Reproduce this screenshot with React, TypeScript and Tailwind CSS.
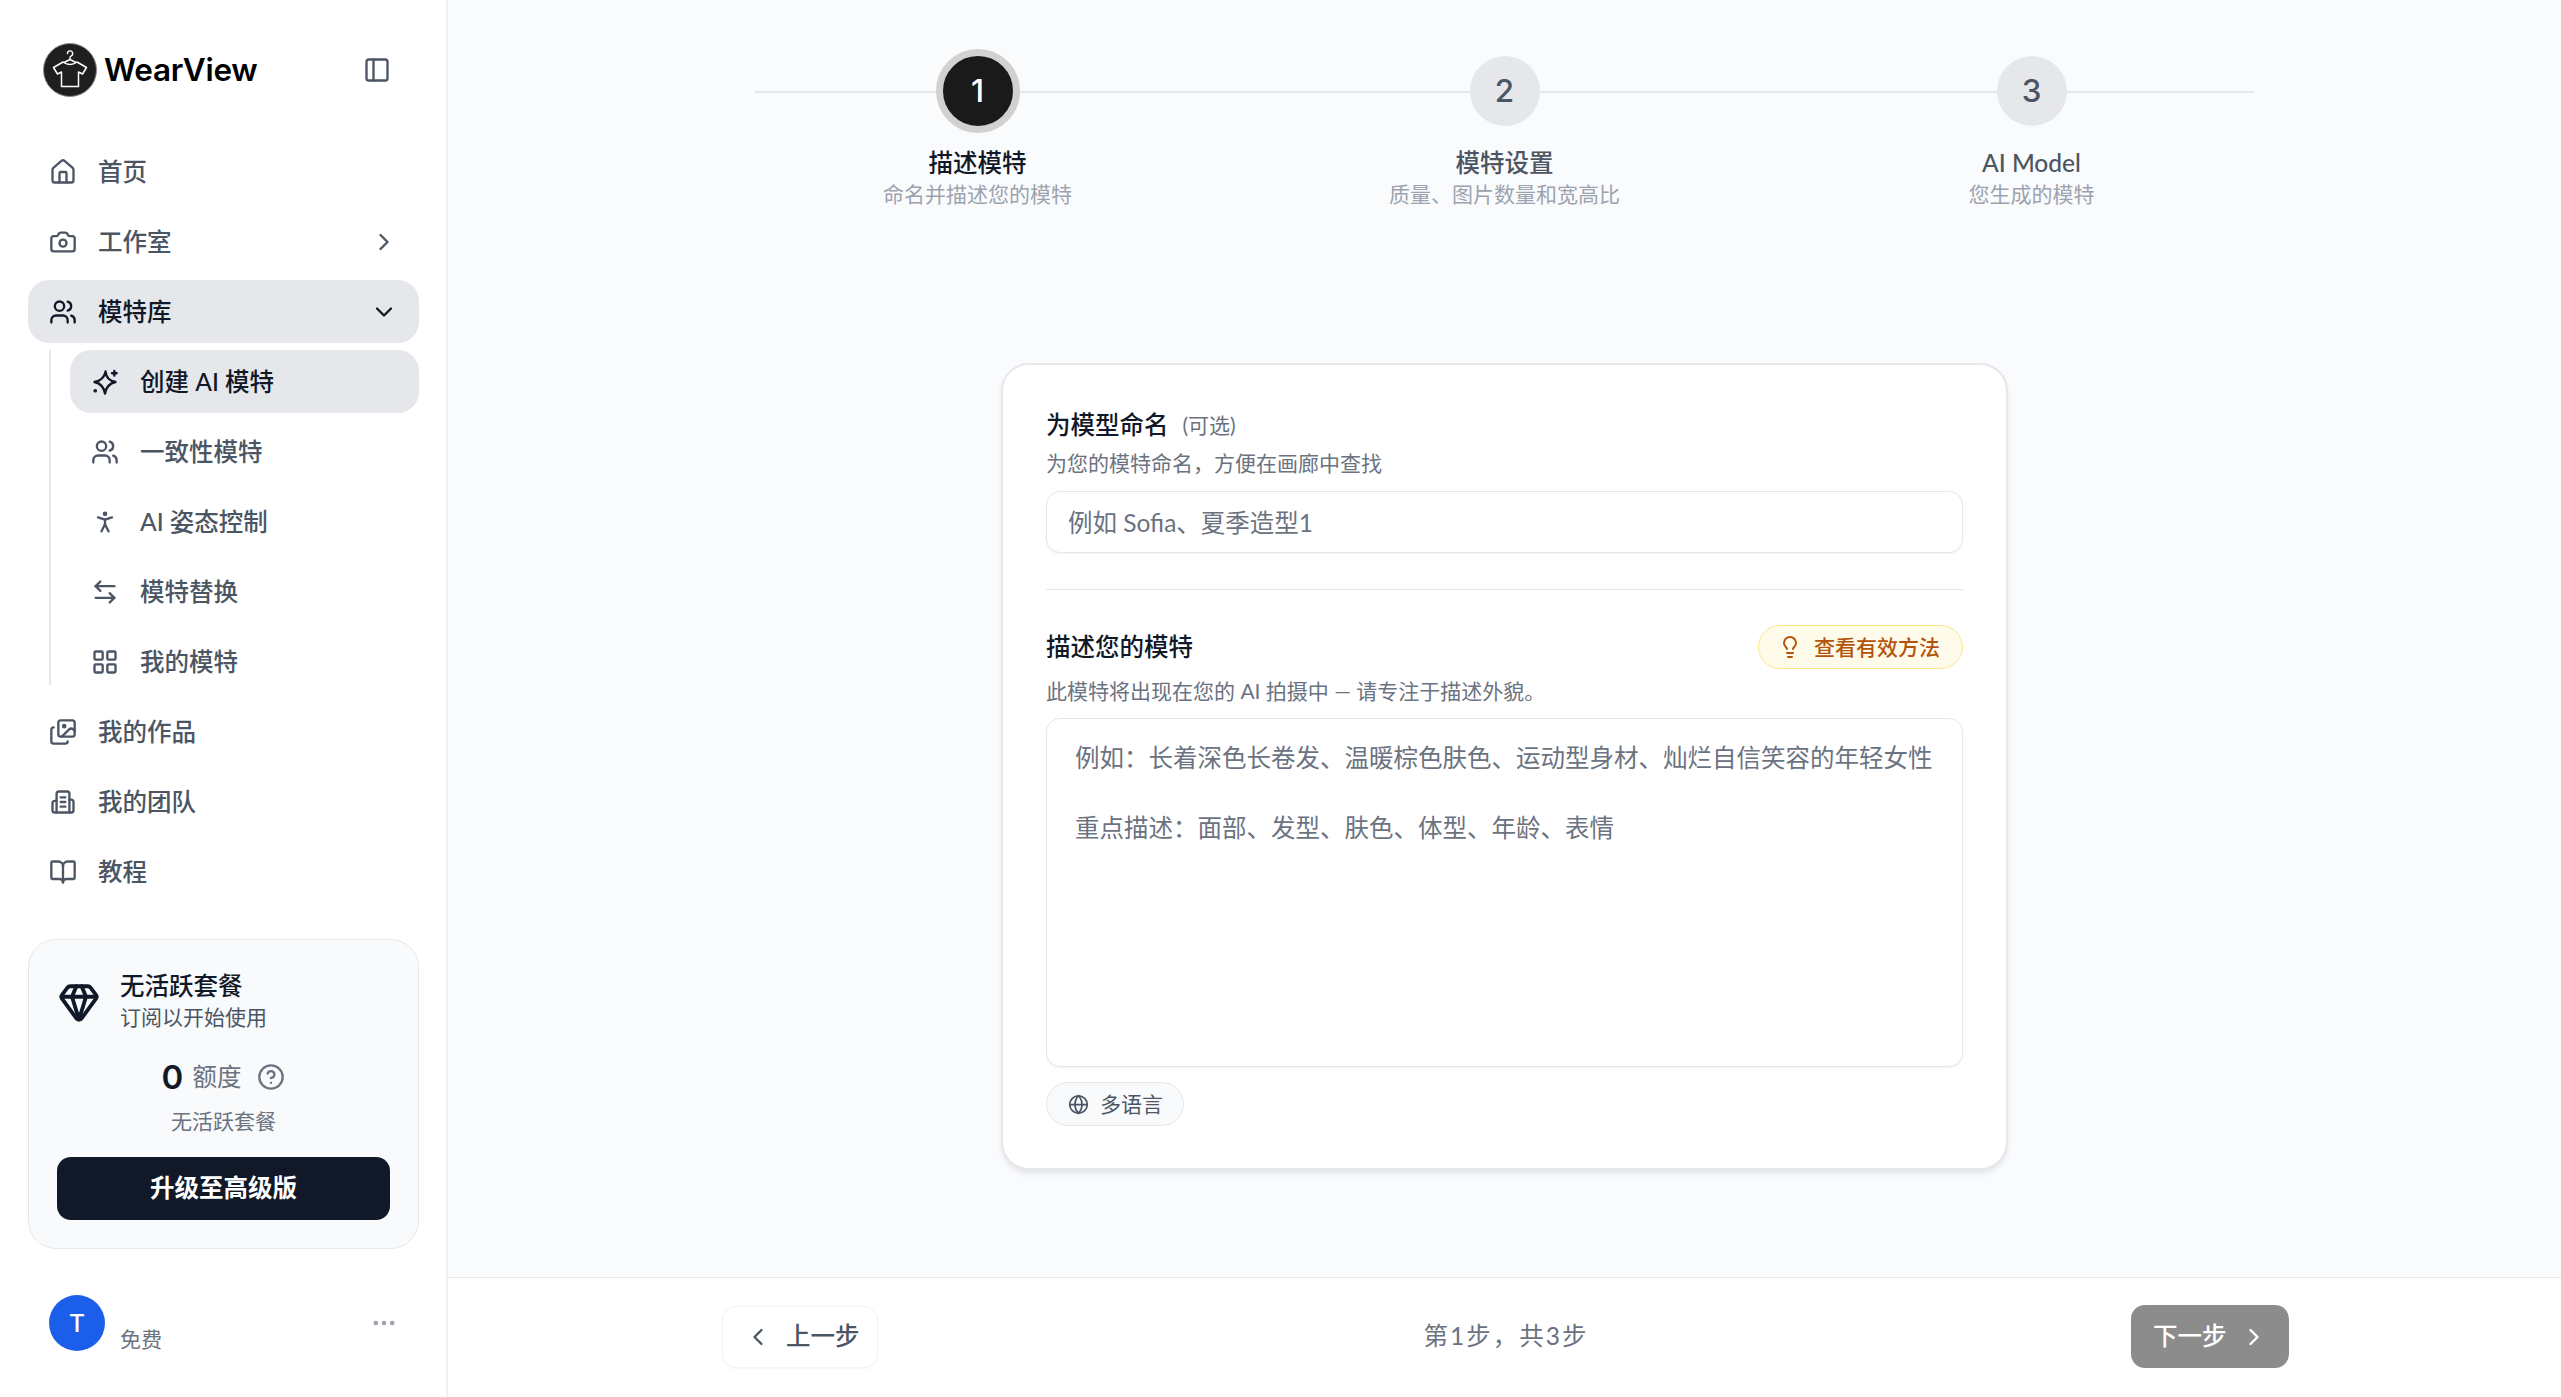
import { ArrowLeftRight, BookOpen, Camera, ChevronDown, ChevronLeft, ChevronRight, CircleHelp, Ellipsis, Gem, Globe, House, Images, LayoutGrid, Lightbulb, PanelLeft, PersonStanding, Users } from "lucide-react";
import type { ReactNode } from "react";

function Logo() {
  return (
    <svg width="54" height="54" viewBox="0 0 54 54" fill="none" className="shrink-0">
      <circle cx="27" cy="27" r="26.5" fill="#1f1f1f" stroke="#8a8a8a" strokeWidth="1" />
      <path d="M20 19 L10.5 24.5 L14.5 31 L18.5 29 V43.5 H35.5 V29 L39.5 31 L43.5 24.5 L34 19 Q27 24 20 19 Z" stroke="#fff" strokeWidth="1.5" strokeLinejoin="round" />
      <path d="M24.5 10.5 a2.6 2.6 0 1 1 3.8 2.3 c-1 .5 -1.3 1 -1.3 2 v1.7 M21 19.5 L27 16.5 L33 19.5" stroke="#fff" strokeWidth="1.4" strokeLinecap="round" strokeLinejoin="round" />
    </svg>
  );
}

function TeamIcon() {
  return (
    <svg width="28" height="28" viewBox="0 0 24 24" fill="none" stroke="currentColor" strokeWidth="2" strokeLinecap="round" strokeLinejoin="round">
      <path d="M6.5 11H5a2 2 0 0 0-2 2v6a2 2 0 0 0 2 2h14a2 2 0 0 0 2-2v-7a2 2 0 0 0-2-2h-1.5" />
      <path d="M6.5 21V5a2 2 0 0 1 2-2h7a2 2 0 0 1 2 2v16" />
      <path d="M10 8h4M10 12h4M10 16h4" />
    </svg>
  );
}

function StarIcon() {
  return (
    <svg width="28" height="28" viewBox="0 0 24 24" fill="none" stroke="currentColor" strokeWidth="2" strokeLinecap="round" strokeLinejoin="round">
      <path d="M12.5 3C12.8 8 15.5 11 21 12C15.5 13.2 13 16 12 22C11 16 8.5 13.2 3 12C8.5 11 11.5 8 12.5 3Z" />
      <path d="M20 2.5v4M18 4.5h4" />
      <circle cx="3.6" cy="19.5" r="0.6" fill="currentColor" />
    </svg>
  );
}

function NavRow({ icon, label, active, trailing }: { icon: ReactNode; label: string; active?: boolean; trailing?: ReactNode }) {
  return (
    <div className={`flex h-[63px] shrink-0 items-center gap-[21px] rounded-[21px] pl-[21px] pr-[21px] text-[24.5px] leading-[34px] font-medium ${active ? "bg-[#e5e7eb] text-[#111827]" : "text-[#4b5563]"}`}>
      <span className="flex h-[28px] w-[28px] shrink-0 items-center justify-center">{icon}</span>
      <span className="flex-1">{label}</span>
      {trailing}
    </div>
  );
}

function Step({ n, title, sub, active }: { n: number; title: string; sub: string; active?: boolean }) {
  return (
    <div className="flex w-[527px] flex-col items-center">
      <div className="flex h-[84px] items-center justify-center font-['Inter']">
        {active ? (
          <div className="flex h-[84px] w-[84px] items-center justify-center rounded-full border-[7px] border-[#d1d1d1] bg-[#1a1a1a] text-[31.5px] font-medium text-white">{n}</div>
        ) : (
          <div className="flex h-[70px] w-[70px] items-center justify-center rounded-full bg-[#e5e7eb] text-[31.5px] font-medium text-[#4b5563]">{n}</div>
        )}
      </div>
      <div className={`mt-[14px] text-[24.5px] leading-[32px] font-medium ${active ? "text-[#111827]" : "text-[#4b5563]"}`}>{title}</div>
      <div className="text-[21px] leading-[30px] text-[#9ca3af]">{sub}</div>
    </div>
  );
}

export default function App() {
  return (
    <div className="flex h-[1397px] w-full overflow-hidden bg-[#fafbfc] font-['Lato','Noto_Sans_CJK_SC',sans-serif]">
      <aside className="flex w-[448px] shrink-0 flex-col border-r-2 border-[#f0f1f3] bg-white">
        <div className="flex items-center pt-[43px] pl-[43px] pr-[55px]">
          <Logo />
          <span className="ml-[7px] flex-1 font-['Inter'] text-[31.5px] leading-[54px] font-semibold tracking-[-0.3px] text-black">WearView</span>
          <PanelLeft size={28} className="text-[#4b5563]" />
        </div>
        <nav className="mt-[43px] flex flex-col gap-[7px] pr-[27px] pl-[28px]">
          <NavRow icon={<House size={28} />} label="首页" />
          <NavRow icon={<Camera size={28} />} label="工作室" trailing={<ChevronRight size={28} />} />
          <NavRow icon={<Users size={28} />} label="模特库" active trailing={<ChevronDown size={28} />} />
          <div className="mb-[8px] ml-[21px] flex h-[335px] flex-col gap-[7px] border-l-2 border-[#e5e7eb] pl-[19px]">
            <NavRow icon={<StarIcon />} label="创建 AI 模特" active />
            <NavRow icon={<Users size={28} />} label="一致性模特" />
            <NavRow icon={<PersonStanding size={28} />} label="AI 姿态控制" />
            <NavRow icon={<ArrowLeftRight size={28} />} label="模特替换" />
            <NavRow icon={<LayoutGrid size={28} />} label="我的模特" />
          </div>
          <NavRow icon={<Images size={28} />} label="我的作品" />
          <NavRow icon={<TeamIcon />} label="我的团队" />
          <NavRow icon={<BookOpen size={28} />} label="教程" />
        </nav>
        <div className="mt-[36px] mr-[27px] ml-[28px] rounded-[28px] border border-[#e5e7eb] bg-[#f8fafc] px-[28px] pt-[31px] pb-[28px]">
          <div className="flex items-center">
            <Gem size={42} strokeWidth={2.2} className="ml-[1px] text-[#111827]" />
            <div className="ml-[20px]">
              <div className="text-[24.5px] leading-[30px] font-medium text-[#111827]">无活跃套餐</div>
              <div className="mt-[1px] text-[21px] leading-[30px] text-[#4b5563]">订阅以开始使用</div>
            </div>
          </div>
          <div className="mt-[25px] flex h-[40px] items-center justify-center">
            <span className="font-['Inter'] text-[33px] leading-[40px] font-semibold text-[#111827]">0</span>
            <span className="ml-[9px] text-[24.5px] text-[#6b7280]">额度</span>
            <CircleHelp size={28} className="ml-[16px] text-[#6b7280]" />
          </div>
          <div className="mt-[9px] text-center text-[21px] leading-[30px] text-[#6b7280]">无活跃套餐</div>
          <button className="mt-[21px] h-[63px] w-full rounded-[14px] bg-[#111827] text-[24.5px] font-bold text-white">升级至高级版</button>
        </div>
        <div className="mt-[46px] flex h-[56px] items-end pl-[49px] pr-[48px]">
          <div className="flex h-[56px] w-[56px] shrink-0 items-center justify-center self-center rounded-full bg-[#1a5eea] font-['Inter'] text-[24.5px] font-medium text-white">T</div>
          <span className="-mb-[3px] ml-[15px] flex-1 text-[21px] leading-[30px] text-[#6b7280]">免费</span>
          <Ellipsis size={28} className="self-center text-[#9ca3af]" />
        </div>
      </aside>

      <main className="flex min-w-0 flex-1 flex-col">
        <div className="flex flex-1 flex-col items-center pt-[49px]">
          <div className="relative flex justify-center">
            <div className="absolute top-[42px] left-[41px] h-[2px] w-[1499px] bg-[#e5e7eb]" />
            <div className="relative flex">
              <Step n={1} title="描述模特" sub="命名并描述您的模特" active />
              <Step n={2} title="模特设置" sub="质量、图片数量和宽高比" />
              <Step n={3} title="AI Model" sub="您生成的模特" />
            </div>
          </div>

          <section className="mt-[154px] w-[1007px] rounded-[28px] border-2 border-[#e5e7eb] bg-white px-[43px] pt-[43px] pb-[42px] shadow-[0_4px_6px_-1px_rgba(0,0,0,0.1)]">
            <div className="flex items-center gap-[14px]">
              <span className="text-[24.5px] leading-[34px] font-medium text-[#111827]">为模型命名</span>
              <span className="text-[21px] text-[#6b7280]">(可选)</span>
            </div>
            <p className="mt-[6px] text-[21px] leading-[30px] text-[#6b7280]">为您的模特命名，方便在画廊中查找</p>
            <input
              readOnly
              placeholder="例如 Sofia、夏季造型1"
              className="mt-[13px] block h-[62px] w-full rounded-[14px] border border-[#e5e7eb] bg-white px-[21px] text-[24.5px] shadow-[0_1px_2px_rgba(0,0,0,0.05)] outline-none placeholder:text-[#6b7280]"
            />
            <div className="mt-[36px] h-px bg-[#e5e7eb]" />
            <div className="mt-[35px] flex items-center justify-between">
              <span className="text-[24.5px] leading-[34px] font-medium text-[#111827]">描述您的模特</span>
              <span className="flex h-[44px] w-[205px] items-center gap-[12px] rounded-full border border-[#fde68a] bg-[#fffbeb] pl-[19px] text-[21px] font-medium text-[#b45309]">
                <Lightbulb size={24} />
                查看有效方法
              </span>
            </div>
            <p className="mt-[7px] text-[21px] leading-[30px] text-[#6b7280]">此模特将出现在您的 AI 拍摄中 — 请专注于描述外貌。</p>
            <textarea
              readOnly
              placeholder={"例如：长着深色长卷发、温暖棕色肤色、运动型身材、灿烂自信笑容的年轻女性\n\n重点描述：面部、发型、肤色、体型、年龄、表情"}
              className="mt-[12px] block h-[349px] w-full resize-none rounded-[14px] border border-[#e5e7eb] bg-white px-[28px] pt-[21px] text-[24.5px] leading-[35px] shadow-[0_1px_2px_rgba(0,0,0,0.05)] outline-none placeholder:text-[#6b7280]"
            />
            <span className="mt-[15px] flex h-[44px] w-[138px] items-center gap-[11px] rounded-full border border-[#e5e7eb] bg-[#f9fafb] pl-[21px] text-[21px] text-[#4b5563]">
              <Globe size={21} className="shrink-0" />
              多语言
            </span>
          </section>
        </div>

        <footer className="flex h-[120px] shrink-0 items-center justify-center border-t border-[#e5e7eb] bg-white pb-[2px] pl-[2px]">
          <div className="flex w-[1567px] items-center justify-between">
            <button className="flex h-[62px] w-[156px] items-center gap-[14px] rounded-[14px] border border-[#f3f4f6] bg-white pl-[21px] text-[24.5px] font-medium text-[#4b5563] shadow-[0_1px_2px_rgba(0,0,0,0.04)]">
              <ChevronLeft size={28} />
              上一步
            </button>
            <span className="ml-[3px] text-[24.5px] tracking-[2px] text-[#6b7280]">第1步，共3步</span>
            <button className="flex h-[63px] w-[158px] items-center gap-[14px] rounded-[14px] bg-[#8c8c8c] pl-[22px] text-[24.5px] font-medium text-white">
              下一步
              <ChevronRight size={28} />
            </button>
          </div>
        </footer>
      </main>
    </div>
  );
}
